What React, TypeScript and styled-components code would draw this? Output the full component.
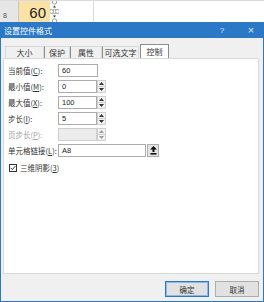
import * as React from 'react';
import styled, { createGlobalStyle } from 'styled-components';

const GlobalStyle = createGlobalStyle`
  html, body {
    margin: 0;
    padding: 0;
    background: #ffffff;
  }
  body {
    font-family: 'Noto Sans CJK SC', 'Liberation Sans', sans-serif;
    font-size: 8px;
    color: #333;
  }
`;

const Page = styled.div`
  width: 264px;
  height: 302px;
  overflow: hidden;
  background: #ffffff;
`;

// 表格背景
const Sheet = styled.div`
  display: flex;
  height: 21px;
  border-top: 1px solid #dadada;
`;

const RowHeader = styled.div`
  width: 19px;
  background: #e6e6e6;
  border-right: 1px solid #c8c8c8;
  color: #555;
  font-family: 'Liberation Sans', sans-serif;
  font-size: 7px;
  display: flex;
  align-items: flex-end;
  padding: 0 0 3px 3px;
  box-sizing: border-box;
`;

const Cell = styled.div`
  width: 31px;
  background: #fae2a5;
  font-family: 'Liberation Sans', sans-serif;
  font-size: 15px;
  color: #222;
  display: flex;
  align-items: center;
  justify-content: flex-end;
  padding-right: 4px;
  padding-top: 2px;
  box-sizing: border-box;
`;

const GridGap = styled.div`
  width: 34px;
  border-right: 1px solid #dadada;
`;

// 对话框
const Dialog = styled.div`
  width: 264px;
  height: 280px;
  box-sizing: border-box;
  border: 1px solid #2b79c6;
  border-top: none;
  display: flex;
  flex-direction: column;
  background: #f0f0f0;
`;

const TitleBar = styled.div`
  height: 16px;
  background: #2b79c6;
  color: #ffffff;
  display: flex;
  align-items: center;
  padding-left: 3px;
  font-size: 8px;
`;

const TitleText = styled.span`
  flex: 1;
`;

const TitleBtn = styled.span<{ $w: number }>`
  width: ${(p) => p.$w}px;
  text-align: center;
  font-family: 'Liberation Sans', sans-serif;
  font-size: ${(p) => (p.$w > 20 ? 11 : 8)}px;
  color: #dfe9f5;
`;

const Body = styled.div`
  flex: 1;
  display: flex;
  flex-direction: column;
  padding: 6px 4px 0 2px;
`;

const TabStrip = styled.div`
  display: flex;
  align-items: flex-end;
  height: 14px;
  padding-left: 2px;
`;

const Tab = styled.div<{ $w: number; $active?: boolean }>`
  width: ${(p) => p.$w}px;
  height: ${(p) => (p.$active ? 14 : 12)}px;
  box-sizing: border-box;
  display: flex;
  align-items: center;
  justify-content: center;
  font-size: 8px;
  color: #333;
  background: ${(p) => (p.$active ? '#ffffff' : '#f0f0f0')};
  border: 1px solid ${(p) => (p.$active ? '#8c8c8c' : '#d9d9d9')};
  border-bottom: none;
  margin-left: ${(p) => (p.$active ? 1 : 0)}px;
  & + & {
    border-left: ${(p) => (p.$active ? '1px solid #8c8c8c' : 'none')};
  }
`;

const Panel = styled.div`
  height: 216px;
  box-sizing: border-box;
  background: #ffffff;
  border: 1px solid #d9d9d9;
  padding: 5px 0 0 4px;
  display: flex;
  flex-direction: column;
  gap: 3px;
`;

const Row = styled.div`
  display: flex;
  align-items: center;
  height: 13px;
`;

const Label = styled.span<{ $disabled?: boolean }>`
  width: 50px;
  font-size: 7.5px;
  white-space: nowrap;
  color: ${(p) => (p.$disabled ? '#a3a3a3' : '#333')};
  u {
    text-decoration-thickness: 0.5px;
  }
`;

const TextBox = styled.div<{ $w: number; $disabled?: boolean }>`
  width: ${(p) => p.$w}px;
  height: 13px;
  box-sizing: border-box;
  border: 1px solid ${(p) => (p.$disabled ? '#cfcfcf' : '#acacac')};
  background: ${(p) => (p.$disabled ? '#ececec' : '#ffffff')};
  font-family: 'Liberation Sans', sans-serif;
  font-size: 7.5px;
  color: #222;
  display: flex;
  align-items: center;
  padding-left: 3px;
`;

const SpinBox = styled.div`
  width: 9px;
  height: 13px;
  display: flex;
  flex-direction: column;
`;

const SpinBtn = styled.div<{ $disabled?: boolean }>`
  flex: 1;
  box-sizing: border-box;
  border: 1px solid #cfcfcf;
  background: #f2f2f2;
  display: flex;
  align-items: center;
  justify-content: center;
  & + & {
    border-top: none;
  }
  svg {
    fill: ${(p) => (p.$disabled ? '#9a9a9a' : '#333')};
  }
`;

const PickBtn = styled.div`
  width: 12px;
  height: 13px;
  box-sizing: border-box;
  margin-left: 1px;
  border: 1px solid #adadad;
  background: #e5e5e5;
  display: flex;
  align-items: center;
  justify-content: center;
`;

const CheckRow = styled.div`
  display: flex;
  align-items: center;
  gap: 3px;
  height: 9px;
  margin-top: 3px;
  font-size: 7.5px;
  padding-left: 1px;
`;

const CheckBox = styled.div`
  width: 8px;
  height: 8px;
  box-sizing: border-box;
  border: 1px solid #333;
  background: #fff;
  display: flex;
  align-items: center;
  justify-content: center;
`;

const Footer = styled.div`
  display: flex;
  justify-content: flex-end;
  gap: 6px;
  padding: 7px 0 0;
`;

const Button = styled.div<{ $primary?: boolean }>`
  width: 44px;
  height: 16px;
  box-sizing: border-box;
  background: #e1e1e1;
  border: 1px solid ${(p) => (p.$primary ? '#2a78cf' : '#adadad')};
  box-shadow: ${(p) => (p.$primary ? 'inset 0 0 0 1px #8fb9e6' : 'none')};
  display: flex;
  align-items: center;
  justify-content: center;
  font-size: 7.5px;
`;

const Arrow = ({ up }: { up?: boolean }) => (
  <svg width="5" height="3" viewBox="0 0 5 3">
    {up ? <polygon points="0,3 5,3 2.5,0" /> : <polygon points="0,0 5,0 2.5,3" />}
  </svg>
);

const Spinner = ({ disabled }: { disabled?: boolean }) => (
  <SpinBox>
    <SpinBtn $disabled={disabled}>
      <Arrow up />
    </SpinBtn>
    <SpinBtn $disabled={disabled}>
      <Arrow />
    </SpinBtn>
  </SpinBox>
);

// 单元格上的数值调节按钮（选中状态）
const SheetSpinner = () => (
  <svg width="9" height="21" viewBox="0 0 9 21">
    <g fill="#fff" stroke="#8a8a8a" strokeWidth="0.8">
      <circle cx="4.5" cy="1" r="2.2" />
      <circle cx="4.5" cy="10.5" r="2.2" />
      <circle cx="4.5" cy="20" r="2.2" />
      <circle cx="1.5" cy="10.5" r="2" />
      <circle cx="7.5" cy="10.5" r="2" />
    </g>
    <polygon points="3,6.5 6,6.5 4.5,4.5" fill="#333" />
    <polygon points="3,14.5 6,14.5 4.5,16.5" fill="#333" />
  </svg>
);

const LinkIcon = () => (
  <svg width="7" height="9" viewBox="0 0 7 9">
    <polygon points="3.5,0 7,3.5 4.5,3.5 4.5,6 2.5,6 2.5,3.5 0,3.5" fill="#111" />
    <rect x="0.5" y="7" width="6" height="1.6" fill="#111" />
  </svg>
);

const CheckMark = () => (
  <svg width="6" height="6" viewBox="0 0 6 6">
    <polyline points="0.8,3 2.4,4.6 5.4,1" fill="none" stroke="#222" strokeWidth="0.9" />
  </svg>
);

const tabs = [
  { name: '大小', w: 39 },
  { name: '保护', w: 26 },
  { name: '属性', w: 32 },
  { name: '可选文字', w: 37 },
];

const fields = [
  { label: '当前值', key: 'C', value: '60', spin: false },
  { label: '最小值', key: 'M', value: '0', spin: true },
  { label: '最大值', key: 'X', value: '100', spin: true },
  { label: '步长', key: 'I', value: '5', spin: true },
];

const App = () => {
  return (
    <Page>
      <GlobalStyle />
      <Sheet>
        <RowHeader>8</RowHeader>
        <Cell>60</Cell>
        <SheetSpinner />
        <GridGap />
      </Sheet>
      <Dialog>
        <TitleBar>
          <TitleText>设置控件格式</TitleText>
          <TitleBtn $w={14}>?</TitleBtn>
          <TitleBtn $w={10} />
          <TitleBtn $w={24}>×</TitleBtn>
        </TitleBar>
        <Body>
          <TabStrip>
            {tabs.map((t) => (
              <Tab key={t.name} $w={t.w}>
                {t.name}
              </Tab>
            ))}
            <Tab $w={29} $active>
              控制
            </Tab>
          </TabStrip>
          <Panel>
            {fields.map((f) => (
              <Row key={f.key}>
                <Label>
                  {f.label}(<u>{f.key}</u>):
                </Label>
                <TextBox $w={f.spin ? 39 : 40}>{f.value}</TextBox>
                {f.spin && <Spinner />}
              </Row>
            ))}
            <Row>
              <Label $disabled>
                页步长(<u>P</u>):
              </Label>
              <TextBox $w={39} $disabled />
              <Spinner disabled />
            </Row>
            <Row>
              <Label>
                单元格链接(<u>L</u>):
              </Label>
              <TextBox $w={88}>A8</TextBox>
              <PickBtn>
                <LinkIcon />
              </PickBtn>
            </Row>
            <CheckRow>
              <CheckBox>
                <CheckMark />
              </CheckBox>
              <span>
                三维阴影(<u>3</u>)
              </span>
            </CheckRow>
          </Panel>
          <Footer>
            <Button $primary>确定</Button>
            <Button>取消</Button>
          </Footer>
        </Body>
      </Dialog>
    </Page>
  );
};

export default App;
